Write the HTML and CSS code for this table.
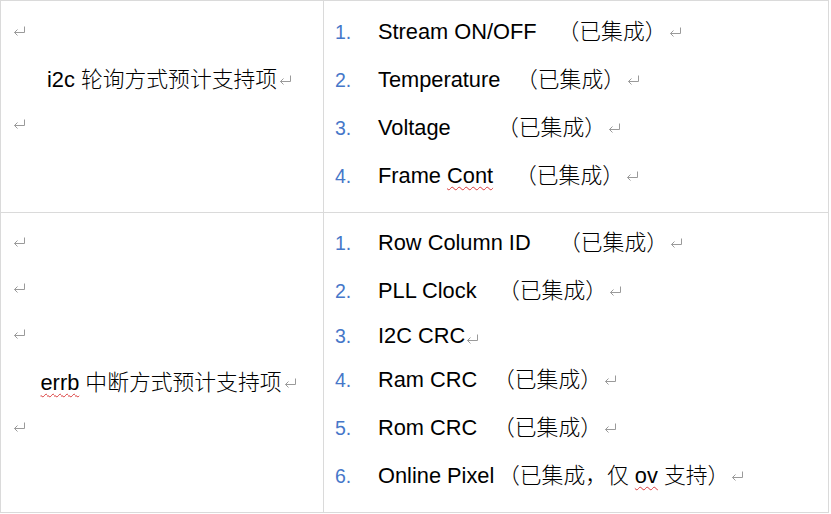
FILE: index.html
```html
<!DOCTYPE html>
<html lang="zh-CN">
<head>
<meta charset="utf-8">
<title>支持项</title>
<link rel="stylesheet" href="styles.css">
</head>
<body>
<div class="sheet">
  <div class="cell left first">
    <p class="para"><svg class="pm solo" viewBox="0 0 12 10"><path d="M11.5 0.5V6.5H1.5M4.5 3.5L1.5 6.5L4.5 9.5"/></svg></p>
    <p class="para text ind-a">i2c <span class="cjk">轮询方式预计支持项</span><svg class="pm" viewBox="0 0 12 10"><path d="M11.5 0.5V6.5H1.5M4.5 3.5L1.5 6.5L4.5 9.5"/></svg></p>
    <p class="para"><svg class="pm solo" viewBox="0 0 12 10"><path d="M11.5 0.5V6.5H1.5M4.5 3.5L1.5 6.5L4.5 9.5"/></svg></p>
  </div>
  <div class="cell right first">
    <ol class="items">
      <li class="item"><span class="num">1.</span><span class="label w180">Stream ON/OFF</span><span class="cjk">（已集成）</span><svg class="pm" viewBox="0 0 12 10"><path d="M11.5 0.5V6.5H1.5M4.5 3.5L1.5 6.5L4.5 9.5"/></svg></li>
      <li class="item"><span class="num">2.</span><span class="label w138">Temperature</span><span class="cjk">（已集成）</span><svg class="pm" viewBox="0 0 12 10"><path d="M11.5 0.5V6.5H1.5M4.5 3.5L1.5 6.5L4.5 9.5"/></svg></li>
      <li class="item"><span class="num">3.</span><span class="label w119">Voltage</span><span class="cjk">（已集成）</span><svg class="pm" viewBox="0 0 12 10"><path d="M11.5 0.5V6.5H1.5M4.5 3.5L1.5 6.5L4.5 9.5"/></svg></li>
      <li class="item"><span class="num">4.</span><span class="label w137">Frame <span class="typo">Cont</span></span><span class="cjk">（已集成）</span><svg class="pm" viewBox="0 0 12 10"><path d="M11.5 0.5V6.5H1.5M4.5 3.5L1.5 6.5L4.5 9.5"/></svg></li>
    </ol>
  </div>
  <div class="cell left second">
    <p class="para"><svg class="pm solo" viewBox="0 0 12 10"><path d="M11.5 0.5V6.5H1.5M4.5 3.5L1.5 6.5L4.5 9.5"/></svg></p>
    <p class="para"><svg class="pm solo" viewBox="0 0 12 10"><path d="M11.5 0.5V6.5H1.5M4.5 3.5L1.5 6.5L4.5 9.5"/></svg></p>
    <p class="para"><svg class="pm solo" viewBox="0 0 12 10"><path d="M11.5 0.5V6.5H1.5M4.5 3.5L1.5 6.5L4.5 9.5"/></svg></p>
    <p class="para text ind-b"><span class="typo">errb</span> <span class="cjk">中断方式预计支持项</span><svg class="pm" viewBox="0 0 12 10"><path d="M11.5 0.5V6.5H1.5M4.5 3.5L1.5 6.5L4.5 9.5"/></svg></p>
    <p class="para"><svg class="pm solo" viewBox="0 0 12 10"><path d="M11.5 0.5V6.5H1.5M4.5 3.5L1.5 6.5L4.5 9.5"/></svg></p>
  </div>
  <div class="cell right second">
    <ol class="items">
      <li class="item"><span class="num">1.</span><span class="label w181">Row Column ID</span><span class="cjk">（已集成）</span><svg class="pm" viewBox="0 0 12 10"><path d="M11.5 0.5V6.5H1.5M4.5 3.5L1.5 6.5L4.5 9.5"/></svg></li>
      <li class="item"><span class="num">2.</span><span class="label w120">PLL Clock</span><span class="cjk">（已集成）</span><svg class="pm" viewBox="0 0 12 10"><path d="M11.5 0.5V6.5H1.5M4.5 3.5L1.5 6.5L4.5 9.5"/></svg></li>
      <li class="item short"><span class="num">3.</span><span class="label">I2C CRC</span><svg class="pm low" viewBox="0 0 12 10"><path d="M11.5 0.5V6.5H1.5M4.5 3.5L1.5 6.5L4.5 9.5"/></svg></li>
      <li class="item"><span class="num">4.</span><span class="label w115">Ram CRC</span><span class="cjk">（已集成）</span><svg class="pm" viewBox="0 0 12 10"><path d="M11.5 0.5V6.5H1.5M4.5 3.5L1.5 6.5L4.5 9.5"/></svg></li>
      <li class="item"><span class="num">5.</span><span class="label w115">Rom CRC</span><span class="cjk">（已集成）</span><svg class="pm" viewBox="0 0 12 10"><path d="M11.5 0.5V6.5H1.5M4.5 3.5L1.5 6.5L4.5 9.5"/></svg></li>
      <li class="item"><span class="num">6.</span><span class="label w120">Online Pixel</span><span class="cjk">（已集成，仅 <span class="typo">ov</span> 支持）</span><svg class="pm" viewBox="0 0 12 10"><path d="M11.5 0.5V6.5H1.5M4.5 3.5L1.5 6.5L4.5 9.5"/></svg></li>
    </ol>
  </div>
</div>
</body>
</html>
```

FILE: styles.css
```css
html, body {
  margin: 0;
  padding: 0;
  background: #ffffff;
}

body {
  font-family: "Liberation Sans", "Noto Sans CJK SC", sans-serif;
  font-size: 21.8px;
  line-height: 24px;
  color: #000000;
}

.sheet {
  display: grid;
  grid-template-columns: 323px 505px;
  grid-template-rows: 212px 300px;
  width: 829px;
  box-sizing: border-box;
  border-left: 1px solid #dadada;
  border-top: 1px solid #dadada;
}

.cell {
  box-sizing: border-box;
  border-right: 1px solid #dadada;
  border-bottom: 1px solid #dadada;
  overflow: hidden;
}

.left {
  padding-left: 12px;
}

.right {
  padding-left: 11px;
}

.first {
  padding-top: 9px;
}

.second {
  padding-top: 8px;
}

.para {
  margin: 0;
  box-sizing: border-box;
  height: 46px;
  padding-top: 9px;
  white-space: nowrap;
}

.para.text {
  height: 47px;
  padding-top: 12px;
}

.ind-a {
  padding-left: 34px;
}

.ind-b {
  padding-left: 27.5px;
}

.cjk {
  font-weight: 300;
}

.items {
  list-style: none;
  margin: 0;
  padding: 0;
}

.item {
  box-sizing: border-box;
  height: 48px;
  padding-top: 10px;
  white-space: nowrap;
}

.item.short {
  height: 41px;
  padding-top: 7px;
}

.num {
  display: inline-block;
  width: 43px;
  font-size: 19.5px;
  color: #4677c9;
}

.label {
  display: inline-block;
}

.w180 { width: 179.5px; }
.w181 { width: 181px; }
.w138 { width: 138px; }
.w137 { width: 137px; }
.w120 { width: 120px; }
.w119 { width: 119px; }
.w115 { width: 115px; }

.typo {
  text-decoration: underline wavy #d93a3a;
  text-decoration-thickness: 1px;
  text-underline-offset: 3px;
}

.pm {
  width: 12px;
  height: 10px;
  margin-left: 2px;
  vertical-align: 2.5px;
  fill: none;
  stroke: #9a9a9a;
  stroke-width: 1;
}

.pm.solo {
  margin-left: 0;
}

.pm.low {
  margin-left: 1px;
  vertical-align: -1px;
}
```
